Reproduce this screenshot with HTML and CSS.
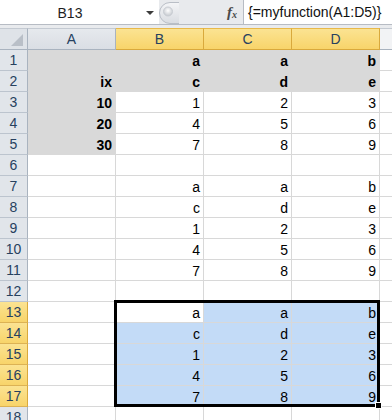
FILE: index.html
```html
<!DOCTYPE html>
<html>
<head>
<meta charset="utf-8">
<link rel="stylesheet" href="styles.css">
</head>
<body>
<div class="app">
  <div class="fbar">
    <div class="namebox"><span class="nb-text">B13</span><span class="caret"></span></div>
    <div class="ctrl">
      <svg class="knob" width="20" height="22" viewBox="0 0 20 22">
        <defs>
          <linearGradient id="kg" x1="0" y1="0" x2="0" y2="1">
            <stop offset="0" stop-color="#f4f5f7"/>
            <stop offset="1" stop-color="#d9dce1"/>
          </linearGradient>
          <radialGradient id="dg" cx="0.5" cy="0.4" r="0.6">
            <stop offset="0" stop-color="#ffffff"/>
            <stop offset="1" stop-color="#c4c8ce"/>
          </radialGradient>
        </defs>
        <path d="M20 0.5 L11 0.5 A10.5 10.5 0 0 0 11 21.5 L20 21.5" fill="url(#kg)" stroke="#b9bec6"/>
        <circle cx="9" cy="9.5" r="4.5" fill="url(#dg)" stroke="#c9cdd3"/>
      </svg>
      <span class="fx"><i>f</i><span class="x">x</span></span>
    </div>
    <div class="formula">{=myfunction(A1:D5)}</div>
  </div>
  <div class="band"></div>
  <div class="sheet">
    <div class="grid">
      <div class="corner"><span class="tri"></span></div>
      <div class="ch">A</div>
      <div class="ch sel">B</div>
      <div class="ch sel">C</div>
      <div class="ch sel">D</div>
      <div class="ch blank"></div>

      <div class="rh">1</div><div class="c g"></div><div class="c g b">a</div><div class="c g b">a</div><div class="c g b">b</div><div class="c"></div>
      <div class="rh">2</div><div class="c g b">ix</div><div class="c g b">c</div><div class="c g b">d</div><div class="c g b">e</div><div class="c"></div>
      <div class="rh">3</div><div class="c g b">10</div><div class="c">1</div><div class="c">2</div><div class="c">3</div><div class="c"></div>
      <div class="rh">4</div><div class="c g b">20</div><div class="c">4</div><div class="c">5</div><div class="c">6</div><div class="c"></div>
      <div class="rh">5</div><div class="c g b">30</div><div class="c">7</div><div class="c">8</div><div class="c">9</div><div class="c"></div>
      <div class="rh">6</div><div class="c"></div><div class="c"></div><div class="c"></div><div class="c"></div><div class="c"></div>
      <div class="rh">7</div><div class="c"></div><div class="c">a</div><div class="c">a</div><div class="c">b</div><div class="c"></div>
      <div class="rh">8</div><div class="c"></div><div class="c">c</div><div class="c">d</div><div class="c">e</div><div class="c"></div>
      <div class="rh">9</div><div class="c"></div><div class="c">1</div><div class="c">2</div><div class="c">3</div><div class="c"></div>
      <div class="rh">10</div><div class="c"></div><div class="c">4</div><div class="c">5</div><div class="c">6</div><div class="c"></div>
      <div class="rh">11</div><div class="c"></div><div class="c">7</div><div class="c">8</div><div class="c">9</div><div class="c"></div>
      <div class="rh">12</div><div class="c"></div><div class="c"></div><div class="c"></div><div class="c"></div><div class="c"></div>
      <div class="rh sel">13</div><div class="c"></div><div class="c">a</div><div class="c s">a</div><div class="c s">b</div><div class="c"></div>
      <div class="rh sel">14</div><div class="c"></div><div class="c s">c</div><div class="c s">d</div><div class="c s">e</div><div class="c"></div>
      <div class="rh sel">15</div><div class="c"></div><div class="c s">1</div><div class="c s">2</div><div class="c s">3</div><div class="c"></div>
      <div class="rh sel">16</div><div class="c"></div><div class="c s">4</div><div class="c s">5</div><div class="c s">6</div><div class="c"></div>
      <div class="rh sel">17</div><div class="c"></div><div class="c s">7</div><div class="c s">8</div><div class="c s">9</div><div class="c"></div>
      <div class="rh">18</div><div class="c"></div><div class="c"></div><div class="c"></div><div class="c"></div><div class="c"></div>
    </div>
    <div class="selbox"><span class="handle"></span></div>
  </div>
</div>
</body>
</html>
```

FILE: styles.css
```css
html, body {
  margin: 0;
  padding: 0;
  background: #ffffff;
}
.app {
  width: 392px;
  height: 420px;
  overflow: hidden;
  font-family: "Liberation Sans", Arial, sans-serif;
}
.fbar {
  display: flex;
  height: 25px;
  box-sizing: border-box;
  border-bottom: 1px solid #b7bcc4;
  background: #e8eaed;
}
.namebox {
  width: 159px;
  background: #ffffff;
  display: flex;
  align-items: center;
  position: relative;
}
.nb-text {
  width: 140px;
  text-align: center;
  font-size: 14px;
  color: #1e1e1e;
  padding-top: 1px;
}
.caret {
  width: 0;
  height: 0;
  border-left: 4px solid transparent;
  border-right: 4px solid transparent;
  border-top: 4px solid #3c3c3c;
  margin-left: 6px;
  margin-top: 2px;
}
.ctrl {
  width: 84px;
  display: flex;
  align-items: center;
  position: relative;
}
.knob {
  margin-top: 1px;
  display: block;
}
.fx {
  margin-left: 48px;
  font-family: "Liberation Serif", "Times New Roman", serif;
  font-size: 14px;
  font-weight: bold;
  color: #4a4a4a;
  display: flex;
  align-items: baseline;
}
.fx i {
  font-size: 15px;
}
.fx .x {
  font-size: 10px;
  font-style: italic;
  margin-left: 0;
  position: relative;
  top: 1px;
}
.formula {
  flex: 1;
  background: #ffffff;
  border-left: 1px solid #b7bcc4;
  font-size: 14px;
  color: #111;
  padding-left: 4px;
  line-height: 24px;
  white-space: nowrap;
}
.band {
  height: 3px;
  background: #e9ebee;
}
.sheet {
  position: relative;
}
.grid {
  display: grid;
  grid-template-columns: 28px 88px 88px 88px 88px 60px;
  grid-template-rows: 22px repeat(18, 21px);
}
.grid > div {
  box-sizing: border-box;
}
.corner {
  background: #dfe3e8;
  border-right: 1px solid #a9b3bf;
  border-bottom: 1px solid #a9b3bf;
  border-top: 1px solid #c4cad2;
  position: relative;
}
.tri {
  position: absolute;
  right: 4px;
  bottom: 3px;
  width: 0;
  height: 0;
  border-left: 12px solid transparent;
  border-bottom: 12px solid #b9bfc7;
}
.ch {
  background: linear-gradient(#e6e9ed, #dadee4);
  border-right: 1px solid #a9b3bf;
  border-bottom: 1px solid #a9b3bf;
  border-top: 1px solid #c4cad2;
  text-align: center;
  font-size: 14px;
  line-height: 20px;
  color: #27415f;
}
.ch.sel {
  background: linear-gradient(#fbe392, #f8d46a);
  border-right-color: #d9a93c;
  border-bottom-color: #d9a93c;
  border-top-color: #e8b94a;
}
.ch.blank {
  background: #f2f3f5;
  border-right: none;
}
.rh {
  background: #e1e5ea;
  border-right: 1px solid #a9b3bf;
  border-bottom: 1px solid #bcc4ce;
  text-align: center;
  font-size: 14px;
  line-height: 21px;
  color: #27415f;
}
.rh.sel {
  background: linear-gradient(#fbe392, #f8d46a);
  border-bottom-color: #dcb254;
  border-right-color: #d9a93c;
}
.c {
  border-right: 1px solid #d8d8d8;
  border-bottom: 1px solid #d8d8d8;
  text-align: right;
  font-size: 14px;
  line-height: 17px;
  padding-top: 3px;
  padding-right: 3px;
  color: #000;
  white-space: nowrap;
  overflow: hidden;
}
.c.g {
  background: #d9d9d9;
  border-right-color: #d9d9d9;
  border-bottom-color: #d9d9d9;
}
.c.b {
  font-weight: bold;
}
.c.s {
  background: #c3dbf7;
}
.selbox {
  position: absolute;
  left: 114px;
  top: 272px;
  width: 266px;
  height: 107px;
  box-sizing: border-box;
  border: 3px solid #000;
  pointer-events: none;
}
.handle {
  position: absolute;
  right: -5px;
  bottom: -5px;
  width: 5px;
  height: 5px;
  background: #000;
  border: 1px solid #fff;
}
```
